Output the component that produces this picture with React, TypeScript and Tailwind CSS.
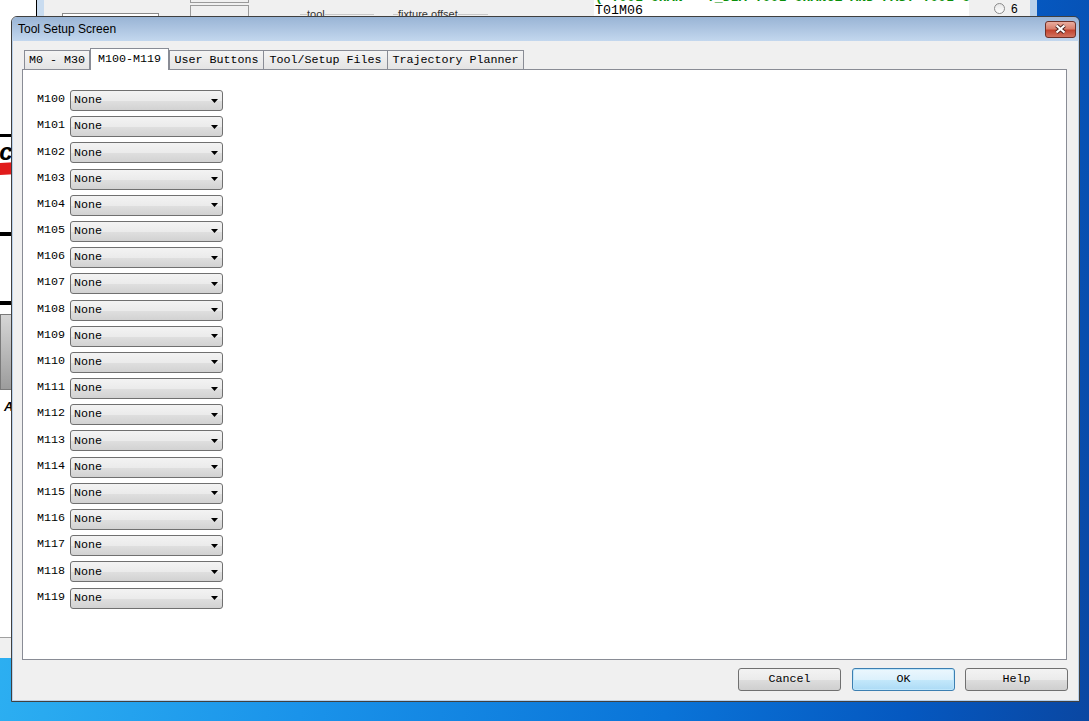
import React from "react";

const codes = Array.from({ length: 20 }, (_, i) => `M${100 + i}`);

function ComboBox() {
  return (
    <div className="flex h-[21px] w-[153px] items-center justify-between rounded-[3px] border border-[#707070] bg-[linear-gradient(#f3f3f3_0%,#ebebeb_50%,#dfdfdf_52%,#d2d2d2_100%)] pl-[3px] pr-[4px]">
      <span className="pt-[1px]">None</span>
      <svg width="7" height="4" viewBox="0 0 7 4">
        <path d="M0 0h7L3.5 4z" fill="#000" />
      </svg>
    </div>
  );
}

function Tab({ label, width, active }: { label: string; width: string; active?: boolean }) {
  if (active) {
    return (
      <div
        className={`relative z-10 -mb-px flex h-[22px] items-start justify-center border border-b-0 border-[#898c95] bg-white pt-[5px] ${width}`}
      >
        {label}
      </div>
    );
  }
  return (
    <div
      className={`flex h-[19px] items-center justify-center border border-b-0 border-[#898c95] bg-[linear-gradient(#f4f4f4,#e4e4e4)] pt-[2px] ${width}`}
    >
      {label}
    </div>
  );
}

function DialogButton({ label, primary }: { label: string; primary?: boolean }) {
  return (
    <div
      className={
        primary
          ? "flex h-[23px] w-[103px] items-center justify-center rounded-[3px] border border-[#3c7fb1] bg-[linear-gradient(#ecf7fd_0%,#dcf1fc_50%,#c4e8fb_52%,#acdbf6_100%)] shadow-[inset_0_0_0_1px_#bfe6fb]"
          : "flex h-[23px] w-[103px] items-center justify-center rounded-[3px] border border-[#707070] bg-[linear-gradient(#f3f3f3_0%,#ebebeb_50%,#dddddd_52%,#cfcfcf_100%)]"
      }
    >
      {label}
    </div>
  );
}

function BackWindow() {
  return (
    <div className="absolute left-0 top-0 flex h-[658px] w-[1037px]">
      {/* left part of the machine screen, only a sliver shows */}
      <div className="flex w-[36px] flex-col overflow-hidden bg-white">
        <div className="h-[134px]" />
        <div className="h-[3px] bg-black" />
        <div className="h-[5px]" />
        <div className="-ml-[14px] h-[20px] overflow-hidden font-['Liberation_Sans',Arial,sans-serif] text-[24px] font-bold italic leading-[20px] text-black">
          ac
        </div>
        <div className="h-[12px] -skew-y-3 bg-[#e11b1b]" />
        <div className="h-[58px]" />
        <div className="h-[4px] bg-black" />
        <div className="h-[65px]" />
        <div className="h-[4px] bg-black" />
        <div className="h-[9px]" />
        <div className="h-[76px] border border-[#7a7a7a] bg-[linear-gradient(#d6d6d6,#9c9c9c)]" />
        <div className="h-[10px]" />
        <div className="pl-[4px] font-['Liberation_Sans',Arial,sans-serif] text-[13px] font-bold italic leading-[13px]">
          A
        </div>
        <div className="flex-1" />
        <div className="h-px bg-[#a0a0a0]" />
        <div className="h-[20px] bg-[#f0f0f0]" />
      </div>
      <div className="w-px bg-black" />
      <div className="w-[7px] bg-[#c9dcf0]" />
      <div className="flex flex-1 flex-col bg-[#f0f0f0]">
        <div className="flex h-[20px] font-['Liberation_Sans',Arial,sans-serif] text-[11px] text-[#333]">
          <div className="ml-[18px] mt-[13px] h-[20px] w-[97px] border-x border-t border-[#8a8a8a] bg-white" />
          <div className="ml-[31px] flex w-[59px] flex-col">
            <div className="h-[3px] border-x border-b border-[#9a9a9a]" />
            <div className="mt-[2px] flex-1 border-x border-t border-[#9a9a9a]" />
          </div>
          <div className="ml-[51px] flex w-[74px] items-start pt-[8px]">
            <div className="mt-[6px] w-[7px] border-t border-[#c8c8c8]" />
            <span className="leading-[12px]">tool</span>
            <div className="mt-[6px] flex-1 border-t border-[#c8c8c8]" />
          </div>
          <div className="ml-[19px] flex w-[95px] items-start pt-[8px]">
            <div className="mt-[6px] w-[5px] border-t border-[#c8c8c8]" />
            <span className="leading-[12px]">fixture offset</span>
            <div className="mt-[6px] flex-1 border-t border-[#c8c8c8]" />
          </div>
          <div className="ml-[106px] w-[375px] overflow-hidden bg-white pl-[1px] font-['Liberation_Mono',monospace] text-[13.3px] leading-[12px]">
            <div className="-mt-[8px] h-[12px] whitespace-nowrap font-bold text-[#0a8f0a]">
              ( TOOL CHAN - T_DIA TOOL CHANGE AND FAST TOOL C
            </div>
            <div className="mt-[1px] whitespace-nowrap text-black">T01M06</div>
          </div>
          <div className="flex flex-1 items-start pl-[25px] pt-[3px]">
            <div className="h-[11px] w-[11px] rounded-full border border-[#8a8a8a] bg-[linear-gradient(#e6e6e6,#ffffff)]" />
            <span className="ml-[6px] text-[12px] leading-[12px] text-black">6</span>
          </div>
          <div className="w-[7px] bg-[#b9d1ea]" />
        </div>
        <div className="flex-1" />
      </div>
    </div>
  );
}

export default function App() {
  return (
    <div className="relative h-[721px] w-[1089px] overflow-hidden bg-[linear-gradient(100deg,#33b9f4_0%,#1a93ea_35%,#0a74d8_65%,#0558c0_85%,#0a47a2_100%)]">
      <BackWindow />

      <div className="absolute left-[11px] top-[16px] flex h-[686px] w-[1069px] flex-col overflow-hidden rounded-t-[6px] border border-[#404040]">
        <div className="flex h-[24px] items-center justify-between bg-linear-to-b from-[#99b4d5] to-[#c3d7ee] pl-[6px] pr-[3px]">
          <span className="font-['Liberation_Sans',Arial,sans-serif] text-[12px] text-black">Tool Setup Screen</span>
          <div className="flex h-[17px] w-[31px] items-center justify-center rounded-[3px] border border-[#6e3128] bg-[linear-gradient(#e9ad9f_0%,#d9806d_45%,#c2442f_55%,#d2735f_100%)]">
            <svg width="13" height="10" viewBox="0 0 13 10">
              <path d="M2.5 1.5L10.5 8.5M10.5 1.5L2.5 8.5" stroke="#4b2420" strokeWidth="4" />
              <path d="M2.5 1.5L10.5 8.5M10.5 1.5L2.5 8.5" stroke="#ffffff" strokeWidth="2.2" />
            </svg>
          </div>
        </div>

        <div className="flex flex-1 flex-col border-x border-b border-[#b9d1ea] bg-[#f0f0f0] font-['Liberation_Mono',monospace] text-[11.7px] leading-none text-black">
          <div className="ml-[9px] mt-[7px] flex w-[1045px] flex-col">
            <div className="flex h-[21px] items-end pl-[2px]">
              <Tab label="M0 - M30" width="w-[66px]" />
              <Tab label="M100-M119" width="w-[79px]" active />
              <Tab label="User Buttons" width="w-[95px]" />
              <Tab label="Tool/Setup Files" width="-ml-px w-[125px]" />
              <Tab label="Trajectory Planner" width="-ml-px w-[137px]" />
            </div>
            <div className="flex h-[591px] flex-col gap-[5.2px] border border-[#898c95] bg-white pl-[14px] pt-[20px]">
              {codes.map((code) => (
                <div key={code} className="flex items-center">
                  <span className="w-[33px] pb-[1px]">{code}</span>
                  <ComboBox />
                </div>
              ))}
            </div>
          </div>

          <div className="mt-[8px] flex justify-end gap-[10px] pr-[10px]">
            <div className="mr-px">
              <DialogButton label="Cancel" />
            </div>
            <DialogButton label="OK" primary />
            <DialogButton label="Help" />
          </div>
        </div>
      </div>
    </div>
  );
}
